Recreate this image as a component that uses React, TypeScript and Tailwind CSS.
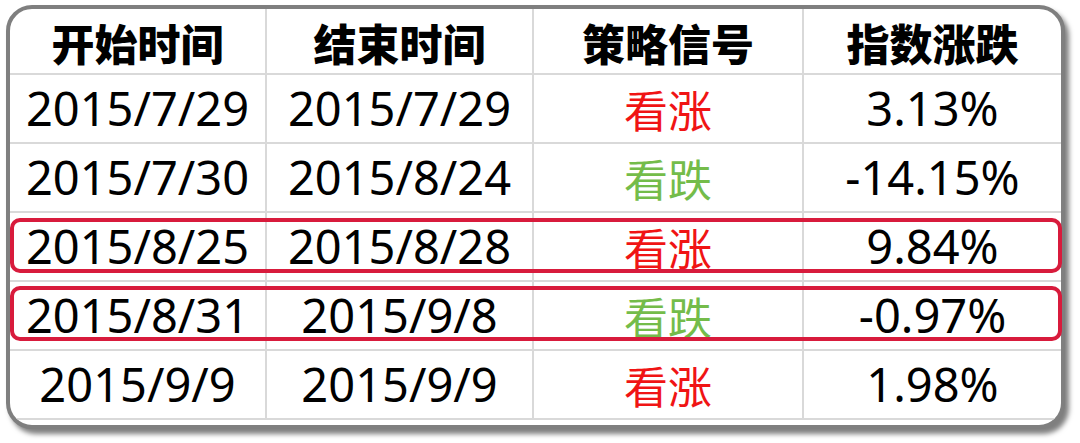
import React from "react";

type Row = { start: string; end: string; signal: "up" | "down"; pct: string };

const rows: Row[] = [
  { start: "2015/7/29", end: "2015/7/29", signal: "up", pct: "3.13%" },
  { start: "2015/7/30", end: "2015/8/24", signal: "down", pct: "-14.15%" },
  { start: "2015/8/25", end: "2015/8/28", signal: "up", pct: "9.84%" },
  { start: "2015/8/31", end: "2015/9/8", signal: "down", pct: "-0.97%" },
  { start: "2015/9/9", end: "2015/9/9", signal: "up", pct: "1.98%" },
];

const headers = ["开始时间", "结束时间", "策略信号", "指数涨跌"];
const widths = ["w-[257px]", "w-[267px]", "w-[270px]", "flex-1"];

export default function App() {
  return (
    <div className="relative w-[1080px] h-[443px] bg-white overflow-hidden">
      <div className="ml-[6px] mt-[5px] w-[1059px] h-[424px] border-4 border-[#7f7f7f] rounded-[26px] shadow-[4px_5px_5px_rgba(0,0,0,0.5)] overflow-hidden bg-white">
        <div className="flex h-[66px] border-b-2 border-[#d9d9d9]">
          {headers.map((h, i) => (
            <div
              key={h}
              className={`${widths[i]} ${i < 3 ? "border-r-2 border-[#d9d9d9]" : ""} flex items-center justify-center text-[43px] font-black text-black pt-[2px] [font-family:'Noto_Sans_CJK_SC',sans-serif]`}
            >
              {h}
            </div>
          ))}
        </div>
        {rows.map((r) => (
          <div key={r.start} className="flex h-[69px] border-b-2 border-[#d9d9d9] [font-family:'Noto_Sans','Noto_Sans_CJK_SC',sans-serif] text-[47px] text-black">
            <div className="w-[257px] border-r-2 border-[#d9d9d9] flex items-center justify-center">{r.start}</div>
            <div className="w-[267px] border-r-2 border-[#d9d9d9] flex items-center justify-center">{r.end}</div>
            <div
              className={`w-[270px] border-r-2 border-[#d9d9d9] flex items-center justify-center text-[44px] [font-family:'Noto_Sans_CJK_SC',sans-serif] ${
                r.signal === "up" ? "text-[#f01414]" : "text-[#74bc4a]"
              }`}
            >
              {r.signal === "up" ? "看涨" : "看跌"}
            </div>
            <div className="flex-1 flex items-center justify-center">{r.pct}</div>
          </div>
        ))}
      </div>
      <div className="absolute left-[10px] top-[218px] w-[1052px] h-[55px] border-4 border-[#d81b3c] rounded-[10px]" />
      <div className="absolute left-[10px] top-[286px] w-[1052px] h-[55px] border-4 border-[#d81b3c] rounded-[10px]" />
    </div>
  );
}
